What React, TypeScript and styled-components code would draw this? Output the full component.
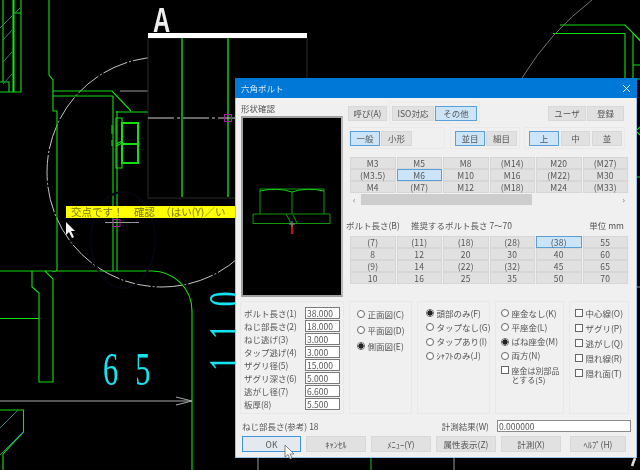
// App.tsx
import React from 'react';
import styled, { createGlobalStyle } from 'styled-components';

const GlobalStyle = createGlobalStyle`
  html, body {
    margin: 0;
    padding: 0;
    background: #000;
  }
  * {
    box-sizing: border-box;
  }
`;

const Stage = styled.div`
  position: relative;
  width: 640px;
  height: 470px;
  overflow: hidden;
  background: #000;
  font-family: 'Noto Sans CJK JP', 'Noto Sans', sans-serif;
  filter: blur(0.3px);
`;

const Drawing = styled.svg`
  position: absolute;
  left: 0;
  top: 0;
`;

const Prompt = styled.div`
  position: absolute;
  left: 66px;
  top: 206px;
  width: 169px;
  height: 12px;
  padding-left: 5px;
  background: #ffff00;
  color: #77770f;
  font-size: 10.5px;
  line-height: 12px;
  word-spacing: 3.5px;
  white-space: pre;
`;

const Dialog = styled.div`
  position: absolute;
  left: 235px;
  top: 78px;
  width: 402px;
  height: 380px;
  display: flex;
  flex-direction: column;
  background: #f0f0f0;
  color: #555;
  font-size: 8.5px;
  box-shadow: 0 0 0 1px #9cc4e4 inset;
`;

const TitleBar = styled.div`
  height: 20px;
  flex: none;
  display: flex;
  align-items: center;
  justify-content: space-between;
  padding: 0 6px;
  background: #0078d7;
  color: #dcecf9;
  font-size: 8.5px;
`;

const Body = styled.div`
  flex: 1;
  display: flex;
  flex-direction: column;
  padding-left: 5px;
`;

const TopArea = styled.div`
  display: flex;
  height: 203px;
`;

const ShapeColumn = styled.div`
  width: 106px;
  flex: none;
  padding-left: 1px;
`;

const ShapeLabel = styled.div`
  height: 18px;
  line-height: 20px;
`;

const Preview = styled.div`
  width: 102px;
  height: 181px;
  background: #000;
  border: 2px solid #a0a0a0;
  border-right-color: #b8b8b8;
`;

const Controls = styled.div`
  flex: 1;
  padding-left: 2px;
  display: flex;
  flex-direction: column;
`;

const ButtonRow = styled.div<{ $top: number }>`
  display: flex;
  align-items: center;
  height: 22px;
  margin-top: ${(p) => p.$top}px;
`;

const Segment = styled.div<{ $width: number; $ml?: number; $pad?: number; $gap?: number }>`
  display: flex;
  align-items: center;
  gap: ${(p) => p.$gap ?? 1}px;
  width: ${(p) => p.$width}px;
  height: 22px;
  margin-left: ${(p) => p.$ml ?? 0}px;
  padding-left: ${(p) => p.$pad ?? 2}px;
  border: 1px solid #e9e9e9;
`;

const PushButton = styled.div<{ $width: number; $active?: boolean }>`
  width: ${(p) => p.$width}px;
  height: 15px;
  display: flex;
  align-items: center;
  justify-content: center;
  flex: none;
  background: ${(p) => (p.$active ? '#cce4f7' : '#e1e1e1')};
  border: 1px solid ${(p) => (p.$active ? '#5a9fd8' : '#d8d8d8')};
`;

const RightButtons = styled.div`
  display: flex;
  gap: 1px;
  margin-left: 68px;
`;

const CellGrid = styled.div<{ $top: number }>`
  display: grid;
  grid-template-columns: repeat(6, 1fr);
  grid-auto-rows: 12px;
  column-gap: 1px;
  width: 278px;
  margin: ${(p) => p.$top}px 0 0 2px;
`;

const Cell = styled.div<{ $active?: boolean }>`
  display: flex;
  align-items: center;
  justify-content: center;
  background: ${(p) => (p.$active ? '#cce4f7' : '#e1e1e1')};
  border: 1px solid ${(p) => (p.$active ? '#5a9fd8' : '#d6d6d6')};
  letter-spacing: 0.2px;
`;

const ScrollBar = styled.div`
  display: flex;
  align-items: center;
  justify-content: space-between;
  width: 278px;
  height: 11px;
  margin: 1px 0 0 2px;
  padding: 0 3px;
  position: relative;
  color: #666;
  font-size: 8px;
`;

const ScrollThumb = styled.div`
  position: absolute;
  left: 11px;
  top: 0;
  width: 171px;
  height: 11px;
  background: #cdcdcd;
`;

const Caption = styled.div`
  display: flex;
  align-items: center;
  height: 12px;
  margin: 14px 0 0 -2px;
`;

const CaptionBolt = styled.span`
  width: 65px;
`;

const CaptionUnit = styled.span`
  margin-left: auto;
  margin-right: 13px;
`;

const Groups = styled.div`
  display: grid;
  grid-template-columns: 104px 63px 73px 69px 60px;
  gap: 5px;
  height: 113px;
`;

const Group = styled.div`
  border: 1px solid #e8e8e8;
  padding-top: 4px;
`;

const FieldRow = styled.div`
  display: flex;
  align-items: center;
  justify-content: space-between;
  height: 13px;
  padding: 0 3px;
`;

const FieldBox = styled.div`
  width: 35px;
  height: 12px;
  padding-left: 1px;
  background: #fff;
  border: 1px solid #7a7a7a;
  line-height: 10px;
`;

const OptionList = styled.div<{ $gap: number; $top: number; $left: number }>`
  display: flex;
  flex-direction: column;
  gap: ${(p) => p.$gap}px;
  margin-top: ${(p) => p.$top}px;
  padding-left: ${(p) => p.$left}px;
`;

const Option = styled.div`
  display: flex;
  align-items: center;
  gap: 2.5px;
  height: 14px;
  white-space: nowrap;
  line-height: 9px;
`;

const TallOption = styled(Option)`
  align-items: flex-start;
  height: 20px;
  margin-top: 3px;
  font-size: 8px;
`;

const Radio = styled.span<{ $checked?: boolean }>`
  width: 8px;
  height: 8px;
  flex: none;
  border-radius: 50%;
  background: ${(p) => (p.$checked ? 'radial-gradient(circle, #222 0 2.4px, #fff 2.9px)' : '#fff')};
  border: 1px solid #666;
`;

const Check = styled.span`
  width: 8px;
  height: 8px;
  flex: none;
  background: #fff;
  border: 1px solid #666;
`;

const StatusRow = styled.div`
  display: flex;
  align-items: center;
  height: 12px;
  margin-top: 6px;
  padding-left: 2px;
`;

const StatusValue = styled.div`
  width: 134px;
  height: 12px;
  margin: 0 6px 0 8px;
  padding-left: 1px;
  background: #fff;
  border: 1px solid #8a8a8a;
  line-height: 10px;
`;

const StatusLabel = styled.span`
  margin-left: auto;
`;

const Footer = styled.div`
  display: grid;
  grid-template-columns: 59px repeat(5, 60px);
  gap: 5px;
  height: 16px;
  margin-top: 4px;
  padding-left: 2px;
`;

const FooterButton = styled.div<{ $primary?: boolean; $last?: boolean }>`
  display: flex;
  align-items: center;
  justify-content: center;
  margin-left: ${(p) => (p.$last ? 4 : 0)}px;
  background: ${(p) => (p.$primary ? '#e3e9ef' : '#e1e1e1')};
  border: 1px solid ${(p) => (p.$primary ? '#3f95d8' : '#d8d8d8')};
`;

const Pointer = styled.svg`
  position: absolute;
  left: 284px;
  top: 444px;
`;

const threadRows = [
  ['M3', 'M5', 'M8', '(M14)', 'M20', '(M27)'],
  ['(M3.5)', 'M6', 'M10', 'M16', '(M22)', 'M30'],
  ['M4', '(M7)', 'M12', '(M18)', 'M24', '(M33)'],
];

const lengthRows = [
  ['(7)', '(11)', '(18)', '(28)', '(38)', '55'],
  ['8', '12', '20', '30', '40', '60'],
  ['(9)', '14', '(22)', '(32)', '45', '65'],
  ['10', '16', '25', '35', '50', '70'],
];

const fields = [
  ['ボルト長さ(1)', '38.000'],
  ['ねじ部長さ(2)', '18.000'],
  ['ねじ逃げ(3)', '3.000'],
  ['タップ逃げ(4)', '3.000'],
  ['ザグリ径(5)', '15.000'],
  ['ザグリ深さ(6)', '5.000'],
  ['逃がし径(7)', '6.600'],
  ['板厚(8)', '5.500'],
];

const CadBackground = () => (
  <Drawing width={640} height={470} viewBox="0 0 640 470">
    <circle cx={162} cy={172} r={115} fill="none" stroke="#c4c4c4" strokeWidth={1} strokeDasharray="26 2 2 2" />
    <g fill="none" stroke="#12e012" strokeWidth={1.1}>
      <path d="M3 0V82M13 0V92M14 0V92M21 0V92M0 92H21M0 82H9V92M14 13H21" />
      <path d="M49 0V75L53 80V111H57V270Q56 272 52 271H0" />
      <path d="M53 91H112L131 111M53 96H113M116 112H148M113 96V271M117 111V271M57 271H152A40 40 0 0 1 192 311V470" />
      <path d="M32 271V287L39 293V382H53V279L45 271M0 318.500H39" />
      <path d="M0 410H23.500V432L3 454V470" />
      <path d="M560 25H625L640 40M553 33.500H625V78M633 33V78M633 33L640 41M633 65H640" />
      <path d="M637 79H640M637 130L640 127M637 132L640 135M637 177H640" />
      <path d="M371 458V470" stroke="#1fae1f" />
      <path d="M116 118H122V168H116ZM116 144L122 141M116 146L122 143M112 125V134M112 140V146" />
      <path d="M122 123H138V163H122ZM122 144H138" strokeWidth={2} />
    </g>
    <path d="M20 8L0 28M18 410L0 428M23 432L0 455M12 30L3 40M12 52L3 62M12 74L3 84" fill="none" stroke="#2f7f7f" />
    <ellipse cx={123} cy={240} rx={32} ry={48} fill="none" stroke="#05050f" strokeWidth={2} />
    <path d="M120 91H148M105 222.500H139M258 458V470M454 458V470M637 287H640" fill="none" stroke="#9a9a9a" />
    <path d="M0 401H192M176 397L192 401L176 405" fill="none" stroke="#a8a8a8" />
    <path d="M632 466L635 458" fill="none" stroke="#ddd" strokeWidth={2.500} />
    <rect x={148} y={38} width={159} height={160} fill="#000" stroke="#2b2b2b" />
    <path d="M182 38V197M228 38V197" stroke="#14c814" strokeWidth={1.500} />
    <rect x={148} y={33} width={159} height={5} fill="#fff" />
    <path d="M148 118H235" stroke="#cfcfcf" strokeDasharray="26 3 3 3" />
    <rect x={224.500} y={114.500} width={7} height={7} fill="none" stroke="#a020a0" />
    <rect x={113} y={219.500} width={7} height={7} fill="none" stroke="#a020a0" />
    <path d="M522 78Q550 32 592 0" fill="none" stroke="#777" />
    <text
      transform="translate(153 32) scale(0.68 1)"
      fontFamily="'Liberation Sans', sans-serif"
      fontWeight={700}
      fontSize={35}
      fill="#eee"
    >
      A
    </text>
    <text
      transform="translate(103 385) scale(0.65 1)"
      fontFamily="'Liberation Serif', serif"
      fontSize={47}
      letterSpacing={26}
      fill="#14e4f0"
    >
      65
    </text>
    <text
      transform="translate(241 371) rotate(-90) scale(0.65 1)"
      fontFamily="'Liberation Serif', serif"
      fontSize={47}
      letterSpacing={27}
      fill="#14e4f0"
    >
      110
    </text>
    <path d="M66 222V235L69 232L72 238L74 237L71 231L75 231Z" fill="#f4f4f4" />
  </Drawing>
);

const BoltPreview = () => (
  <svg width={98} height={177} viewBox="2 2 98 177">
    <g fill="none" stroke="#0e9a0e">
      <path d="M19 98V73H83V98M51 76V98M12 98H89V107.500H12Z" />
      <path d="M45 98L50 107M52 99L56 107" />
      <path d="M19 75Q36 71 51 76Q66 71 83 75" stroke="#18d018" />
    </g>
    <path d="M51 108V118" stroke="#c01010" strokeWidth={2} />
    <path d="M48 108H54M51 105V111" stroke="#8a8a8a" />
  </svg>
);

const App = () => {
  return (
    <>
      <GlobalStyle />
      <Stage>
        <CadBackground />
        <Prompt>{'交点です！　確認　（はい(Y)／い'}</Prompt>
        <Dialog>
          <TitleBar>
            <span>六角ボルト</span>
            <svg width={9} height={9} viewBox="0 0 9 9">
              <path d="M1 1L8 8M8 1L1 8" stroke="#e6f2fc" strokeWidth={1} />
            </svg>
          </TitleBar>
          <Body>
            <TopArea>
              <ShapeColumn>
                <ShapeLabel>形状確認</ShapeLabel>
                <Preview>
                  <BoltPreview />
                </Preview>
              </ShapeColumn>
              <Controls>
                <ButtonRow $top={4}>
                  <PushButton $width={39}>呼び(A)</PushButton>
                  <Segment $width={91} $ml={2}>
                    <PushButton $width={42}>ISO対応</PushButton>
                    <PushButton $width={42} $active>その他</PushButton>
                  </Segment>
                  <RightButtons>
                    <PushButton $width={38}>ユーザ</PushButton>
                    <PushButton $width={37}>登録</PushButton>
                  </RightButtons>
                </ButtonRow>
                <ButtonRow $top={3}>
                  <Segment $width={96} $ml={1} $pad={0}>
                    <PushButton $width={30} $active>一般</PushButton>
                    <PushButton $width={31}>小形</PushButton>
                  </Segment>
                  <Segment $width={70} $ml={5} $pad={4}>
                    <PushButton $width={30} $active>並目</PushButton>
                    <PushButton $width={31}>細目</PushButton>
                  </Segment>
                  <Segment $width={101} $ml={4} $pad={4} $gap={2}>
                    <PushButton $width={30} $active>上</PushButton>
                    <PushButton $width={29}>中</PushButton>
                    <PushButton $width={30}>並</PushButton>
                  </Segment>
                </ButtonRow>
                <CellGrid $top={8}>
                  {threadRows.flat().map((label) => (
                    <Cell key={label} $active={label === 'M6'}>{label}</Cell>
                  ))}
                </CellGrid>
                <ScrollBar>
                  <ScrollThumb />
                  <span>‹</span>
                  <span>›</span>
                </ScrollBar>
                <Caption>
                  <CaptionBolt>ボルト長さ(B)</CaptionBolt>
                  <span>推奨するボルト長さ 7〜70</span>
                  <CaptionUnit>単位 mm</CaptionUnit>
                </Caption>
                <CellGrid $top={5}>
                  {lengthRows.flat().map((label) => (
                    <Cell key={label} $active={label === '(38)'}>{label}</Cell>
                  ))}
                </CellGrid>
              </Controls>
            </TopArea>
            <Groups>
              <Group>
                {fields.map(([label, value]) => (
                  <FieldRow key={label}>
                    <span>{label}</span>
                    <FieldBox>{value}</FieldBox>
                  </FieldRow>
                ))}
              </Group>
              <Group>
                <OptionList $gap={2} $top={1} $left={7}>
                  <Option><Radio />正面図(C)</Option>
                  <Option><Radio />平面図(D)</Option>
                  <Option><Radio $checked />側面図(E)</Option>
                </OptionList>
              </Group>
              <Group>
                <OptionList $gap={0.3} $top={0} $left={8}>
                  <Option><Radio $checked />頭部のみ(F)</Option>
                  <Option><Radio />タップなし(G)</Option>
                  <Option><Radio />タップあり(I)</Option>
                  <Option><Radio />ｼｬﾌﾄのみ(J)</Option>
                </OptionList>
              </Group>
              <Group>
                <OptionList $gap={0.3} $top={0} $left={5}>
                  <Option><Radio />座金なし(K)</Option>
                  <Option><Radio />平座金(L)</Option>
                  <Option><Radio $checked />ばね座金(M)</Option>
                  <Option><Radio />両方(N)</Option>
                  <TallOption><Check /><span>座金は別部品<br />とする(S)</span></TallOption>
                </OptionList>
              </Group>
              <Group>
                <OptionList $gap={1} $top={0} $left={5}>
                  <Option><Check />中心線(O)</Option>
                  <Option><Check />ザグリ(P)</Option>
                  <Option><Check />逃がし(Q)</Option>
                  <Option><Check />隠れ線(R)</Option>
                  <Option><Check />隠れ面(T)</Option>
                </OptionList>
              </Group>
            </Groups>
            <StatusRow>
              <span>ねじ部長さ(参考) 18</span>
              <StatusLabel>計測結果(W)</StatusLabel>
              <StatusValue>0.000000</StatusValue>
            </StatusRow>
            <Footer>
              <FooterButton $primary>OK</FooterButton>
              <FooterButton>ｷｬﾝｾﾙ</FooterButton>
              <FooterButton>ﾒﾆｭｰ(Y)</FooterButton>
              <FooterButton>属性表示(Z)</FooterButton>
              <FooterButton>計測(X)</FooterButton>
              <FooterButton $last>ﾍﾙﾌﾟ(H)</FooterButton>
            </Footer>
          </Body>
        </Dialog>
        <Pointer width={12} height={16} viewBox="0 0 12 16">
          <path d="M1 1V13L4 10.500L6 15L8 14L6 10H10Z" fill="#fff" stroke="#666" strokeWidth={0.8} />
        </Pointer>
      </Stage>
    </>
  );
};

export default App;
